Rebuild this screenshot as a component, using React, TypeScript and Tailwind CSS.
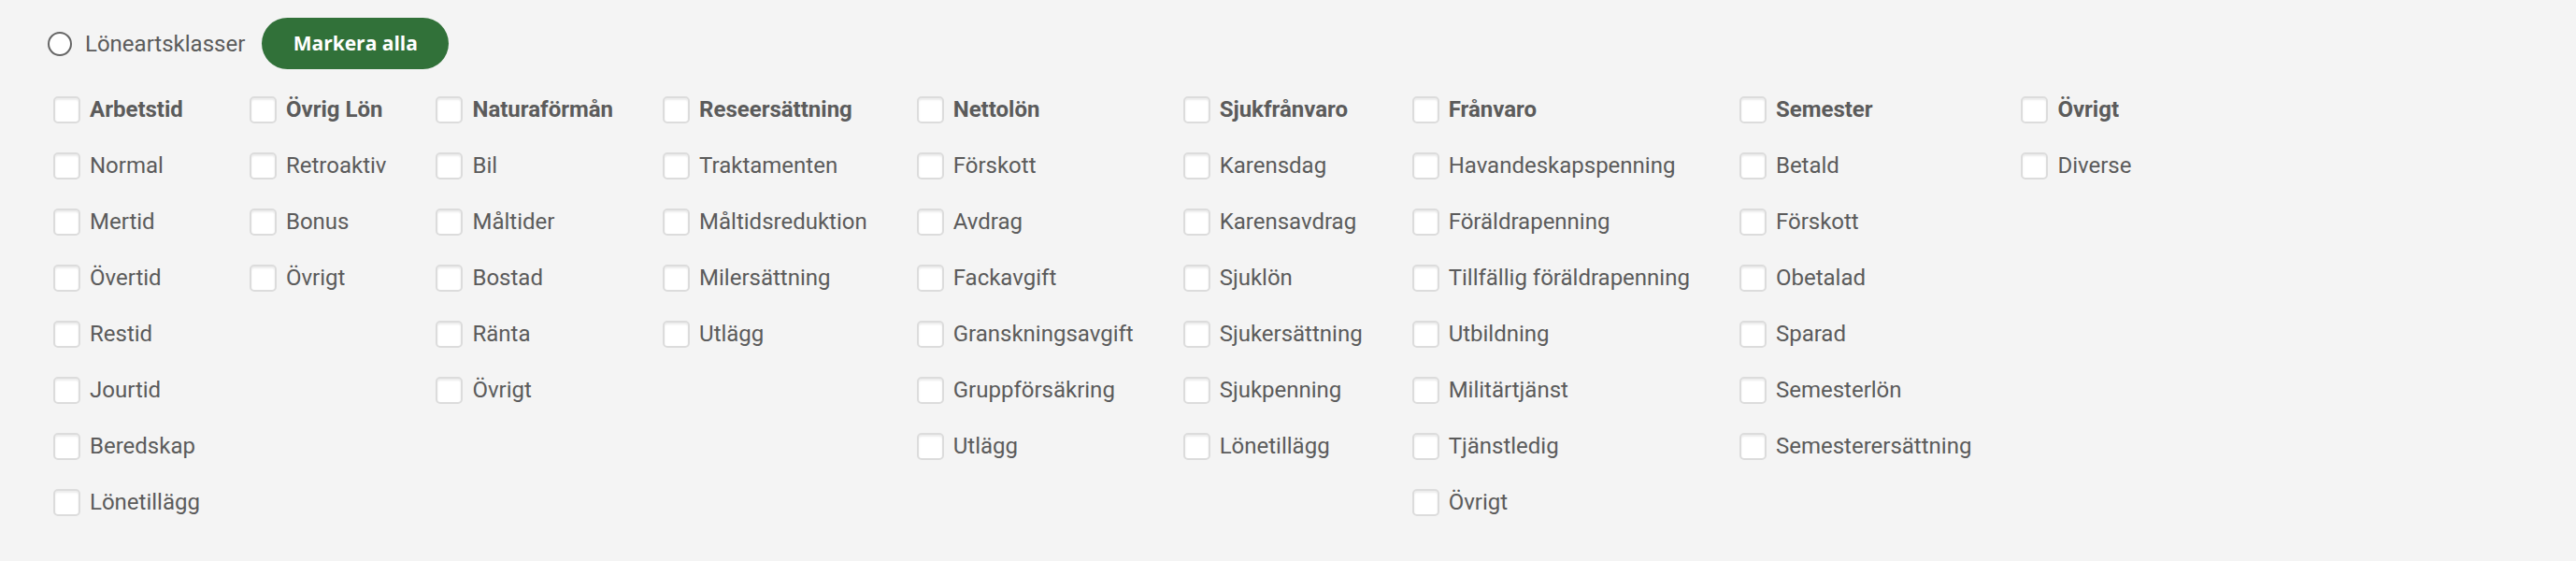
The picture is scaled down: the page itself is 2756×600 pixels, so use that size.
import React from "react";

type Column = {
  title: string;
  items: string[];
};

const columns: Column[] = [
  {
    title: "Arbetstid",
    items: ["Normal", "Mertid", "Övertid", "Restid", "Jourtid", "Beredskap", "Lönetillägg"],
  },
  { title: "Övrig Lön", items: ["Retroaktiv", "Bonus", "Övrigt"] },
  { title: "Naturaförmån", items: ["Bil", "Måltider", "Bostad", "Ränta", "Övrigt"] },
  {
    title: "Reseersättning",
    items: ["Traktamenten", "Måltidsreduktion", "Milersättning", "Utlägg"],
  },
  {
    title: "Nettolön",
    items: ["Förskott", "Avdrag", "Fackavgift", "Granskningsavgift", "Gruppförsäkring", "Utlägg"],
  },
  {
    title: "Sjukfrånvaro",
    items: ["Karensdag", "Karensavdrag", "Sjuklön", "Sjukersättning", "Sjukpenning", "Lönetillägg"],
  },
  {
    title: "Frånvaro",
    items: [
      "Havandeskapspenning",
      "Föräldrapenning",
      "Tillfällig föräldrapenning",
      "Utbildning",
      "Militärtjänst",
      "Tjänstledig",
      "Övrigt",
    ],
  },
  {
    title: "Semester",
    items: ["Betald", "Förskott", "Obetalad", "Sparad", "Semesterlön", "Semesterersättning"],
  },
  { title: "Övrigt", items: ["Diverse"] },
];

function CheckRow({ label, bold }: { label: string; bold?: boolean }) {
  return (
    <label className="flex h-[60px] items-center gap-[10px] whitespace-nowrap">
      <span className="h-[29px] w-[29px] shrink-0 rounded-[5px] border-2 border-[#dcdcdc] bg-white shadow-[inset_0_2px_2px_rgba(0,0,0,0.08)]" />
      <span className={bold ? "font-bold" : "font-normal"}>{label}</span>
    </label>
  );
}

export default function App() {
  return (
    <div
      className="min-h-screen bg-[#f4f4f4] pl-[51px] pt-[19px] text-[24px] text-[#5b5b5b]"
      style={{ fontFamily: "Roboto, 'Liberation Sans', sans-serif" }}
    >
      <div className="flex h-[55px] items-center">
        <span className="h-[26px] w-[26px] rounded-full border-2 border-[#666] bg-white" />
        <span className="ml-[14px]">Löneartsklasser</span>
        <button
          type="button"
          className="ml-[18px] h-[55px] w-[200px] rounded-full bg-[#317139] text-[21px] font-bold text-white"
          style={{ fontFamily: "'Open Sans', sans-serif" }}
        >
          Markera alla
        </button>
      </div>

      <div className="mt-[13px] flex gap-[53px] pl-[6px]">
        {columns.map((col) => (
          <div key={col.title} className="flex flex-col">
            <CheckRow label={col.title} bold />
            {col.items.map((item) => (
              <CheckRow key={item} label={item} />
            ))}
          </div>
        ))}
      </div>
    </div>
  );
}
